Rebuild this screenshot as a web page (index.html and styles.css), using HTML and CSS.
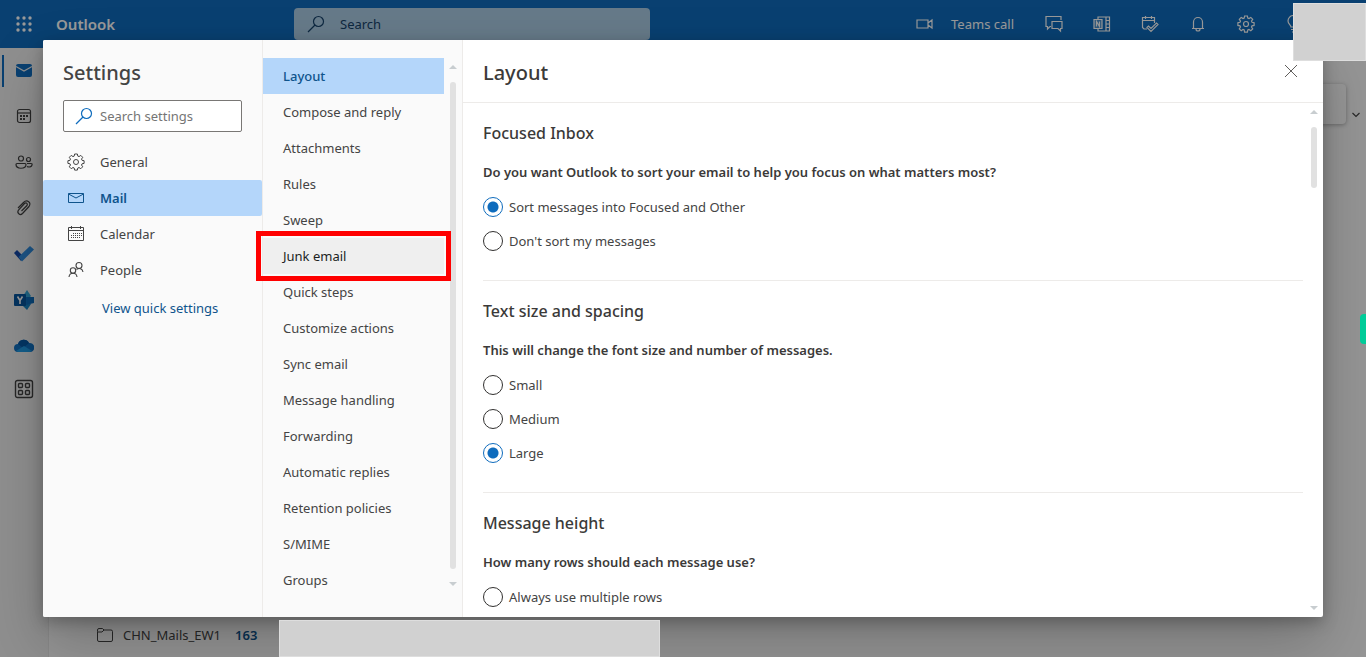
FILE: index.html
```html
<!DOCTYPE html>
<html lang="en">
<head>
<meta charset="utf-8">
<meta name="viewport" content="width=device-width, initial-scale=1">
<title>Outlook - Settings</title>
<link rel="stylesheet" href="styles.css">
</head>
<body>
<div class="app">
  <header class="topbar">
    <button class="icon-btn waffle" aria-label="App launcher">
      <svg width="16" height="16" viewBox="0 0 16 16" fill="currentColor"><circle cx="2" cy="2" r="1.7"/><circle cx="8" cy="2" r="1.7"/><circle cx="14" cy="2" r="1.7"/><circle cx="2" cy="8" r="1.7"/><circle cx="8" cy="8" r="1.7"/><circle cx="14" cy="8" r="1.7"/><circle cx="2" cy="14" r="1.7"/><circle cx="8" cy="14" r="1.7"/><circle cx="14" cy="14" r="1.7"/></svg>
    </button>
    <span class="brand">Outlook</span>
    <label class="top-search">
      <svg width="18" height="18" viewBox="0 0 18 18" fill="none" stroke="currentColor" stroke-width="1.2"><circle cx="11.5" cy="6.5" r="5"/><path d="M8 10 1 17"/></svg>
      <input type="search" placeholder="Search" aria-label="Search">
    </label>
    <div class="top-actions">
      <button class="teams"><svg width="18" height="12" viewBox="0 0 18 12" fill="none" stroke="currentColor" stroke-width="1.2"><path d="M1 2h11v8H1zM12 5l4-3v8l-4-3"/></svg>Teams call</button>
      <button class="icon-btn" aria-label="Chat"><svg width="18" height="18" viewBox="0 0 18 18" fill="none" stroke="currentColor" stroke-width="1.2"><path d="M6 11.5H5L2.500 14v-2.500H1v-10h15V5"/><path d="M7 6.500h10v7h-1.500V16L13 13.500H7z"/></svg></button>
      <button class="icon-btn" aria-label="OneNote"><svg width="18" height="18" viewBox="0 0 18 18" fill="none" stroke="currentColor" stroke-width="1.2"><path d="M5 4V2h11.500v14H5v-2M13 2v14M13 5.500h3.500M13 9h3.500M13 12.500h3.500"/><path d="M1 4.500h8v9H1z" fill="currentColor" fill-opacity=".25"/><path d="M3.500 11.500v-5l3 5v-5"/></svg></button>
      <button class="icon-btn" aria-label="My Day"><svg width="18" height="18" viewBox="0 0 18 18" fill="none" stroke="currentColor" stroke-width="1.2"><path d="M6 14H3L1.500 12.500V2.500h12V8M1.500 5.500h12M4.500 1v3M10.500 1v3"/><path d="m6 12.500 1.500-1.500 2.500 2.500 5.500-5.500L17 9.500l-7 7z"/></svg></button>
      <button class="icon-btn" aria-label="Notifications"><svg width="18" height="18" viewBox="0 0 18 18" fill="none" stroke="currentColor" stroke-width="1.2"><path d="M3 13.500h12M4.500 13.500V7a4.500 4.500 0 0 1 9 0v6.500M7 14a2 2 0 0 0 4 0"/></svg></button>
      <button class="icon-btn" aria-label="Settings"><svg width="18" height="18" viewBox="0 0 18 18" fill="none" stroke="currentColor" stroke-width="1.2"><circle cx="9" cy="9" r="2.500"/><path d="M7.600 1h2.800l.4 2.100 1.200.5 1.800-1.200 1.900 1.900-1.200 1.800.5 1.200 2.100.4v2.700l-2.100.4-.5 1.200 1.200 1.800-1.900 1.900-1.800-1.200-1.200.5-.4 2.100H7.600l-.4-2.100-1.200-.5-1.800 1.200-1.900-1.900 1.200-1.800-.5-1.200L.9 10.400V7.700L3 7.300l.5-1.200-1.200-1.800 1.900-1.900L6 3.600l1.200-.5z"/></svg></button>
      <button class="icon-btn" aria-label="Tips"><svg width="18" height="18" viewBox="0 0 18 18" fill="none" stroke="currentColor" stroke-width="1.2"><path d="M6 12c0-2-3-3-3-6a5.500 5.500 0 0 1 11 0c0 3-3 4-3 6zM6 14.500h5M7 17h3"/></svg></button>
    </div>
  </header>
  <div class="workspace">
    <nav class="rail" aria-label="Apps">
      <a class="current" href="#mail" aria-label="Mail"><svg width="18" height="18" viewBox="0 0 18 18"><rect x="1" y="2" width="16" height="13" rx="2" fill="#0f6cbd"/><path d="m1 4.500 8 4.500 8-4.500" fill="none" stroke="#f0f0f0" stroke-width="1.200"/></svg></a>
      <a href="#calendar" aria-label="Calendar"><svg width="18" height="18" viewBox="0 0 18 18" fill="none" stroke="currentColor" stroke-width="1.2"><rect x="2.500" y="2.500" width="13" height="13" rx="2"/><path d="M2.500 6h13"/><path d="M5 9h2m1 0h2m1 0h2M5 12h2m1 0h2" stroke-width="2"/></svg></a>
      <a href="#people" aria-label="People"><svg width="18" height="18" viewBox="0 0 18 18" fill="none" stroke="currentColor" stroke-width="1.200"><circle cx="6" cy="5.500" r="2.500"/><circle cx="13.500" cy="6.500" r="2"/><path d="M2 10.500h8q1 0 1 1c0 5-10 5-10 0q0-1 1-1zM12 10.500h4q1.500 0 1 1.500c-.5 2-3 2.500-5 1.500"/></svg></a>
      <a href="#files" aria-label="Files"><svg width="18" height="18" viewBox="0 0 18 18" fill="none" stroke="currentColor" stroke-width="1.200"><path d="m3 9 5.500-5.500c3.500-3.500 8.500 0 5.500 4l-6.500 7c-2.500 2.500-6-.5-4-3.500l6-6.500c2-1.500 3.500.5 2.500 2L6.500 12"/></svg></a>
      <a href="#todo" aria-label="To Do"><svg width="20" height="18" viewBox="0 0 20 18"><path d="m0 8 3-3 7 7-3 4z" fill="#1548a8"/><path d="M4.500 12 16 1l4 3.500L8 16.500z" fill="#2f8bdc"/></svg></a>
      <a href="#yammer" aria-label="Yammer"><svg width="20" height="20" viewBox="0 0 20 20"><path d="m13 0 4 6-4 4-4-4z" fill="#35a5d8"/><path d="m9 12 8 2-4 6-4-4z" fill="#1684c4"/><path d="M11 7h9v6l-8 2z" fill="#106ebe"/><rect y="4" width="12" height="12" rx="1" fill="#07559f"/><path d="m3.500 6.500 2.500 4 2.500-4M6 10v4" fill="none" stroke="#fff" stroke-width="1.600"/></svg></a>
      <a href="#onedrive" aria-label="OneDrive"><svg width="20" height="14" viewBox="0 0 20 14"><path d="M4 13a4 4 0 0 1 0-8 6 6 0 0 1 11-1 4.500 4.500 0 0 1 1.500 9z" fill="#1272c4"/><path d="M4 5a6 6 0 0 1 11-1L9 9z" fill="#0759a5"/><path d="m2 12 8-5 8 5-2 1H4z" fill="#219ce5"/></svg></a>
      <a href="#apps" aria-label="More apps"><svg width="20" height="20" viewBox="0 0 20 20" fill="none" stroke="currentColor" stroke-width="1.400"><rect x="1.500" y="1.500" width="17" height="17" rx="2"/><rect x="4.500" y="4.500" width="4" height="4" rx="1"/><rect x="11.500" y="4.500" width="4" height="4" rx="1"/><rect x="4.500" y="11.500" width="4" height="4" rx="1"/><rect x="11.500" y="11.500" width="4" height="4" rx="1"/></svg></a>
    </nav>
    <div class="mailbox">
      <div class="ribbon-row"><div class="ribbon"></div><svg width="10" height="6" viewBox="0 0 10 6" fill="none" stroke="currentColor" stroke-width="1.200"><path d="m1.500 1 3.500 3.500L8.500 1"/></svg></div>
      <a class="folder" href="#folder"><svg width="18" height="16" viewBox="0 0 18 16" fill="none" stroke="currentColor"><path d="M1.500 4.500V3a1.500 1.500 0 0 1 1.500-1.500h3.500L8 3h7A1.500 1.500 0 0 1 16.500 4.500v8.500a1.500 1.500 0 0 1-1.500 1.500H3A1.500 1.500 0 0 1 1.500 13zM1.500 5H6l2-2"/></svg><span>CHN_Mails_EW1</span><b>163</b></a>
    </div>
  </div>
</div>

<div class="overlay">
  <section class="dialog" role="dialog" aria-label="Settings">
    <div class="categories">
      <h1>Settings</h1>
      <label class="settings-search">
        <svg width="18" height="18" viewBox="0 0 18 18" fill="none" stroke="currentColor" stroke-width="1.200"><circle cx="11.500" cy="6.500" r="5"/><path d="M8 10 1 17"/></svg>
        <input type="search" placeholder="Search settings" aria-label="Search settings">
      </label>
      <nav>
        <a href="#general"><svg width="18" height="18" viewBox="0 0 18 18" fill="none" stroke="currentColor"><circle cx="9" cy="9" r="2.500"/><path d="M7.600 1h2.800l.4 2.100 1.200.5 1.800-1.200 1.900 1.900-1.200 1.800.5 1.200 2.100.4v2.700l-2.100.4-.5 1.200 1.200 1.800-1.900 1.900-1.800-1.200-1.200.5-.4 2.100H7.600l-.4-2.100-1.200-.5-1.800 1.200-1.900-1.900 1.200-1.800-.5-1.200L.9 10.400V7.700L3 7.300l.5-1.200-1.200-1.800 1.900-1.900L6 3.600l1.200-.5z"/></svg>General</a>
        <a class="selected" href="#mail-settings"><svg width="18" height="18" viewBox="0 0 18 18" fill="none" stroke="currentColor"><path d="M1.500 4.500h15v9h-15zM1.500 5 9 9l7.500-4"/></svg>Mail</a>
        <a href="#calendar-settings"><svg width="18" height="18" viewBox="0 0 18 18" fill="none" stroke="currentColor"><path d="M1.500 2.500h15v13h-15zM1.500 5.500h15M4.500 1v3M13.500 1v3"/><path d="M6 8.500h9M4 10.500h11M4 12.500h9" stroke-dasharray="1 1"/></svg>Calendar</a>
        <a href="#people-settings"><svg width="18" height="18" viewBox="0 0 18 18" fill="none" stroke="currentColor" stroke-width="1.100"><circle cx="12" cy="4.500" r="3"/><circle cx="6" cy="9.500" r="2.700"/><path d="M2 16c.5-5 7.500-5 8 0M9.500 8.500c2.500-2 6-1 6.500 2.500"/></svg>People</a>
      </nav>
      <a class="quick" href="#quick">View quick settings</a>
    </div>

    <div class="subpages">
      <nav>
        <a class="selected" href="#layout">Layout</a>
        <a href="#compose">Compose and reply</a>
        <a href="#attachments">Attachments</a>
        <a href="#rules">Rules</a>
        <a href="#sweep">Sweep</a>
        <a class="hovered" href="#junk">Junk email</a>
        <a href="#quicksteps">Quick steps</a>
        <a href="#customize">Customize actions</a>
        <a href="#sync">Sync email</a>
        <a href="#handling">Message handling</a>
        <a href="#forwarding">Forwarding</a>
        <a href="#automatic">Automatic replies</a>
        <a href="#retention">Retention policies</a>
        <a href="#smime">S/MIME</a>
        <a href="#groups">Groups</a>
      </nav>
      <div class="scrollbar" aria-hidden="true"><i class="up"></i><span class="track"><i class="thumb full"></i></span><i class="down"></i></div>
    </div>

    <div class="page">
      <header class="page-head">
        <h2>Layout</h2>
        <button class="close" aria-label="Close"><svg width="14" height="14" viewBox="0 0 14 14" fill="none" stroke="currentColor"><path d="m1 1 12 12M13 1 1 13"/></svg></button>
      </header>
      <div class="page-body">
        <form class="sections">
          <fieldset>
            <h3>Focused Inbox</h3>
            <p>Do you want Outlook to sort your email to help you focus on what matters most?</p>
            <label><input type="radio" name="focused" checked>Sort messages into Focused and Other</label>
            <label><input type="radio" name="focused">Don't sort my messages</label>
          </fieldset>
          <fieldset>
            <h3>Text size and spacing</h3>
            <p>This will change the font size and number of messages.</p>
            <label><input type="radio" name="size">Small</label>
            <label><input type="radio" name="size">Medium</label>
            <label><input type="radio" name="size" checked>Large</label>
          </fieldset>
          <fieldset>
            <h3>Message height</h3>
            <p>How many rows should each message use?</p>
            <label><input type="radio" name="rows">Always use multiple rows</label>
          </fieldset>
        </form>
        <div class="scrollbar" aria-hidden="true"><i class="up"></i><span class="track"><i class="thumb short"></i></span><i class="down"></i></div>
      </div>
    </div>
  </section>
</div>
<div class="cover account"></div>
<div class="cover message"></div>
<div class="side-tab"></div>
</body>
</html>
```

FILE: styles.css
```css
* { box-sizing: border-box; }
html, body { height: 100%; }
body {
  margin: 0;
  overflow: hidden;
  position: relative;
  font: 13px/20px "Noto Sans", "Open Sans", sans-serif;
  color: #444;
}
a { color: inherit; text-decoration: none; }
button, input { font: inherit; color: inherit; }
button { border: 0; padding: 0; background: none; }
svg { flex: none; display: block; }
h1, h2, h3, p { margin: 0; }

/* Mail window */
.app { height: 100%; display: flex; flex-direction: column; background: #f8f8f8; }
.topbar {
  flex: none;
  height: 48px;
  display: flex;
  align-items: center;
  background: #0f6cbd;
  color: #fff;
}
.icon-btn { width: 48px; height: 48px; display: grid; place-items: center; }
.brand { width: 246px; padding-left: 8px; font-size: 15px; font-weight: 600; }
.top-search {
  flex: 0 1 356px;
  height: 32px;
  display: flex;
  align-items: center;
  gap: 15px;
  padding: 0 13px;
  border-radius: 4px;
  background: #abcbe5;
  color: #17436b;
}
.top-search input, .settings-search input {
  flex: 1;
  min-width: 0;
  border: 0;
  padding: 0;
  background: none;
  outline: 0;
}
.top-search input::placeholder { color: #17436b; opacity: 1; }
.top-actions { margin-left: auto; padding-right: 48px; display: flex; }
.teams { display: flex; align-items: center; gap: 17px; margin-right: 16px; }
.workspace { flex: 1; min-height: 0; display: flex; }
.rail {
  flex: none;
  width: 49px;
  background: #efefef;
  border-right: 1px solid #e4e4e4;
  color: #424242;
}
.rail a { height: 46px; display: grid; place-items: center; }
.rail a:last-child { height: 40px; }
.rail .current {
  height: 32px;
  margin: 7px 2px 6px;
  border-left: 2px solid #0f6cbd;
  padding-right: 2px;
}
.mailbox {
  flex: 1;
  display: flex;
  flex-direction: column;
  justify-content: space-between;
  padding: 36px 5px 12px 47px;
}
.ribbon-row { display: flex; align-items: flex-end; gap: 5px; }
.ribbon-row svg { margin-bottom: 6px; }
.ribbon { flex: 1; height: 40px; border-radius: 4px; background: #fafafa; box-shadow: 0 1px 4px rgba(0, 0, 0, .3); }
.folder { display: flex; align-items: center; gap: 9px; }
.folder b { margin-left: 5px; font-weight: 600; color: #0f548c; }

/* Settings dialog */
.overlay { position: absolute; inset: 0; padding: 40px 43px; background: rgba(0, 0, 0, .4); }
.dialog {
  height: 100%;
  display: flex;
  overflow: hidden;
  border-radius: 2px;
  background: #fff;
  box-shadow: 0 26px 58px rgba(0, 0, 0, .22), 0 5px 15px rgba(0, 0, 0, .25);
}
.categories { flex: none; width: 220px; padding-top: 19px; background: #fafafa; border-right: 1px solid #edebe9; }
h1, h2 { font-size: 20px; line-height: 28px; font-weight: 500; }
h1 { padding-left: 20px; }
.settings-search {
  height: 32px;
  margin: 13px 20px 12px;
  padding: 0 11px;
  display: flex;
  align-items: center;
  gap: 7px;
  border: 1px solid #797775;
  border-radius: 2px;
  background: #fff;
  color: #0f6cbd;
}
.settings-search input::placeholder { color: #757575; opacity: 1; }
.categories nav a { height: 36px; display: flex; align-items: center; gap: 15px; padding-left: 24px; border-radius: 2px; }
.categories nav .selected, .subpages nav .selected { background: #b4d6fa; color: #0f548c; font-weight: 600; }
.quick { display: block; margin: 10px 0 0 59px; color: #0f548c; }
.subpages { flex: none; width: 200px; display: flex; padding-top: 18px; background: #fafafa; border-right: 1px solid #edebe9; }
.subpages nav { flex: 1; }
.subpages nav a { height: 36px; display: flex; align-items: center; padding-left: 20px; }
.subpages nav .selected { font-weight: 500; }
.subpages nav .hovered {
  background: #efefef;
  color: #201f1e;
  outline: 5px solid #f00;
  outline-offset: 2px;
  position: relative;
}
.scrollbar { flex: none; width: 18px; padding: 7px 0; display: flex; flex-direction: column; align-items: center; gap: 13px; }
.subpages .scrollbar { height: 535px; }
.up, .down { border: 4px solid transparent; }
.up { border-top: 0; border-bottom-color: #c8cdd0; }
.down { border-bottom: 0; border-top-color: #c8cdd0; }
.track { flex: 1; display: flex; }
.thumb { width: 6px; border-radius: 3px; background: #e1e1e1; }
.full { height: 100%; }
.short { height: 61px; }
.page { flex: 1; min-width: 0; display: flex; flex-direction: column; }
.page-head {
  flex: none;
  height: 63px;
  padding: 19px 25px 0 20px;
  display: flex;
  align-items: flex-start;
  justify-content: space-between;
  border-bottom: 1px solid #edebe9;
}
.close { padding-top: 5px; color: #605e5c; }
.page-body { flex: 1; min-height: 0; display: flex; }
.page h2, .page h3, .page p { color: #3b3a39; }
.sections { flex: 1; padding: 0 2px 0 20px; overflow: hidden; }
fieldset { margin: 0; border: 0; border-bottom: 1px solid #edebe9; padding: 18px 0 22px; }
h3 { font-size: 16px; line-height: 24px; font-weight: 500; }
fieldset p { margin: 17px 0 8px; font-weight: 600; }
fieldset label { height: 34px; display: flex; align-items: center; gap: 6px; }
input[type="radio"] {
  appearance: none;
  width: 20px;
  height: 20px;
  margin: 0;
  border: 1px solid #323130;
  border-radius: 50%;
}
input[type="radio"]:checked {
  border-color: #0f6cbd;
  background: radial-gradient(circle, #0f6cbd 5px, #fff 6px);
}

/* Panels floating over the window */
.cover { position: absolute; background: #d1d1d1; border: 1px solid #dedede; }
.account { top: 3px; right: 0; width: 73px; height: 58px; }
.message { left: 279px; bottom: 0; width: 381px; height: 37px; }
.side-tab { position: absolute; right: 0; top: 314px; width: 6px; height: 30px; border-radius: 4px 0 0 4px; background: #00cc99; }
```
